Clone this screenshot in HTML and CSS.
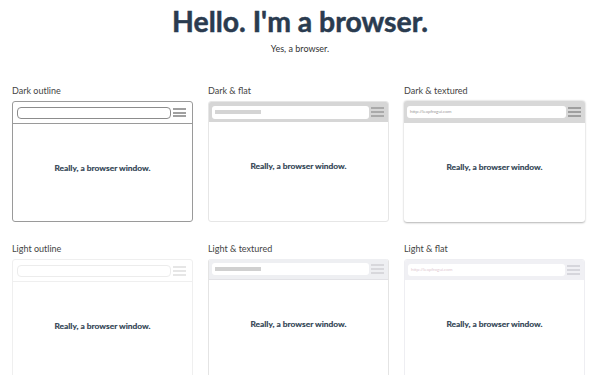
FILE: index.html
```html
<!DOCTYPE html>
<html lang="en">
<head>
<meta charset="utf-8">
<title>Hello. I'm a browser.</title>
<link rel="stylesheet" href="styles.css">
</head>
<body>
<header class="hero">
  <h1>Hello. I'm a browser.</h1>
  <p>Yes, a browser.</p>
</header>
<main class="grid">
  <section class="demo">
    <h2>Dark outline</h2>
    <div class="win dark-outline">
      <div class="bar"><div class="addr"></div><div class="menu"><span></span><span></span><span></span></div></div>
      <div class="view">Really, a browser window.</div>
    </div>
  </section>
  <section class="demo">
    <h2>Dark &amp; flat</h2>
    <div class="win dark-flat">
      <div class="bar"><div class="addr"><i class="ph"></i></div><div class="menu"><span></span><span></span><span></span></div></div>
      <div class="view">Really, a browser window.</div>
    </div>
  </section>
  <section class="demo">
    <h2>Dark &amp; textured</h2>
    <div class="win dark-textured">
      <div class="bar"><div class="addr"><span class="url">http://leapfrogui.com</span></div><div class="menu"><span></span><span></span><span></span></div></div>
      <div class="view">Really, a browser window.</div>
    </div>
  </section>
  <section class="demo">
    <h2>Light outline</h2>
    <div class="win light-outline">
      <div class="bar"><div class="addr"></div><div class="menu"><span></span><span></span><span></span></div></div>
      <div class="view">Really, a browser window.</div>
    </div>
  </section>
  <section class="demo">
    <h2>Light &amp; textured</h2>
    <div class="win light-textured">
      <div class="bar"><div class="addr"><i class="ph"></i></div><div class="menu"><span></span><span></span><span></span></div></div>
      <div class="view">Really, a browser window.</div>
    </div>
  </section>
  <section class="demo">
    <h2>Light &amp; flat</h2>
    <div class="win light-flat">
      <div class="bar"><div class="addr"><span class="url">http://leapfrogui.com</span></div><div class="menu"><span></span><span></span><span></span></div></div>
      <div class="view">Really, a browser window.</div>
    </div>
  </section>
</main>
</body>
</html>
```
FILE: styles.css
```css
* { box-sizing: border-box; }
html, body { margin: 0; padding: 0; background: #fff; }
body {
  font-family: Lato, "Open Sans", sans-serif;
  color: #2c3e50;
  width: 600px;
  height: 375px;
  overflow: hidden;
}
.hero { text-align: center; padding-top: 4px; }
.hero h1 {
  margin: 0;
  font-size: 28.4px;
  line-height: 35px;
  font-weight: 700;
  color: #2a3b4f;
  -webkit-text-stroke: 0.5px #2a3b4f;
}
.hero p {
  margin: 4px 0 0;
  font-size: 9px;
  line-height: 12px;
  color: #333;
}
.grid {
  display: grid;
  grid-template-columns: repeat(3, 181px);
  column-gap: 15px;
  row-gap: 21px;
  padding: 30px 15px 0 12px;
}
.demo h2 {
  margin: 0 0 4px;
  font-size: 9px;
  line-height: 12px;
  font-weight: 400;
  color: #444;
}
.win {
  height: 121px;
  border-radius: 3px;
  overflow: hidden;
  background: #fff;
  display: flex;
  flex-direction: column;
}
.bar {
  height: 22px;
  flex: none;
  display: flex;
  align-items: center;
  padding: 0 6px 0 4px;
  gap: 2px;
}
.addr {
  flex: 1;
  height: 12px;
  border-radius: 3px;
  background: #fff;
  display: flex;
  align-items: center;
  padding-left: 3px;
}
.ph { display: block; width: 46px; height: 4px; background: #d4d4d4; }
.url { font-size: 4.5px; color: #999; line-height: 1; }
.menu {
  width: 13px;
  display: flex;
  flex-direction: column;
  gap: 2px;
}
.menu span { display: block; height: 1.5px; background: #999; }
.view {
  flex: 1;
  text-align: center;
  font-size: 8.4px;
  font-weight: 700;
  padding-top: 39px;
  color: #2c3e50;
  -webkit-text-stroke: 0.15px #2c3e50;
}

/* Dark outline */
.dark-outline { border: 1px solid #9a9a9a; }
.dark-outline .bar { border-bottom: 1px solid #9a9a9a; height: 22px; }
.dark-outline .addr { border: 1px solid #8c8c8c; height: 12px; border-radius: 4px; }
.dark-outline .menu span { height: 2px; background: #a0a0a0; }
.dark-outline .menu { gap: 1.5px; }

/* Dark & flat */
.dark-flat { border: 1px solid #e6e6e6; }
.dark-flat .bar { background: #d6d6d6; height: 20px; padding: 0 4px 0 3px; }
.dark-flat .addr { height: 13px; }
.dark-flat .menu span { background: #aaa; height: 2px; }

/* Dark & textured */
.dark-textured { box-shadow: 0 0.5px 2px rgba(0,0,0,0.3); }
.dark-textured .bar { background: #d8d8d8; height: 22px; padding: 0 4px 0 3px; }
.dark-textured .addr { height: 12px; }
.dark-textured .menu span { background: #9f9f9f; height: 2px; }

/* Light outline */
.light-outline { border: 1px solid #efefef; }
.light-outline .bar { border-bottom: 1px solid #efefef; }
.light-outline .addr { border: 1px solid #ececec; border-radius: 4px; }
.light-outline .menu span { background: #e6e6e6; height: 2px; }

/* Light & textured */
.light-textured { border: 1px solid #e4e4e4; border-top: none; }
.light-textured .bar { background: #eeeff2; height: 21px; border-bottom: 1px solid #e2e2e6; padding: 0 4px 0 3px; }
.light-textured .ph { background: #d0d0d0; }
.light-textured .menu span { background: #d8d8dc; height: 2px; }

/* Light & flat */
.light-flat { border: 1px solid #eeeef2; }
.light-flat .bar { background: #f0f0f4; height: 20px; padding: 0 4px 0 3px; }
.light-flat .url { color: #e0c8d0; }
.light-flat .menu span { background: #d6d6dc; height: 2px; }
```
